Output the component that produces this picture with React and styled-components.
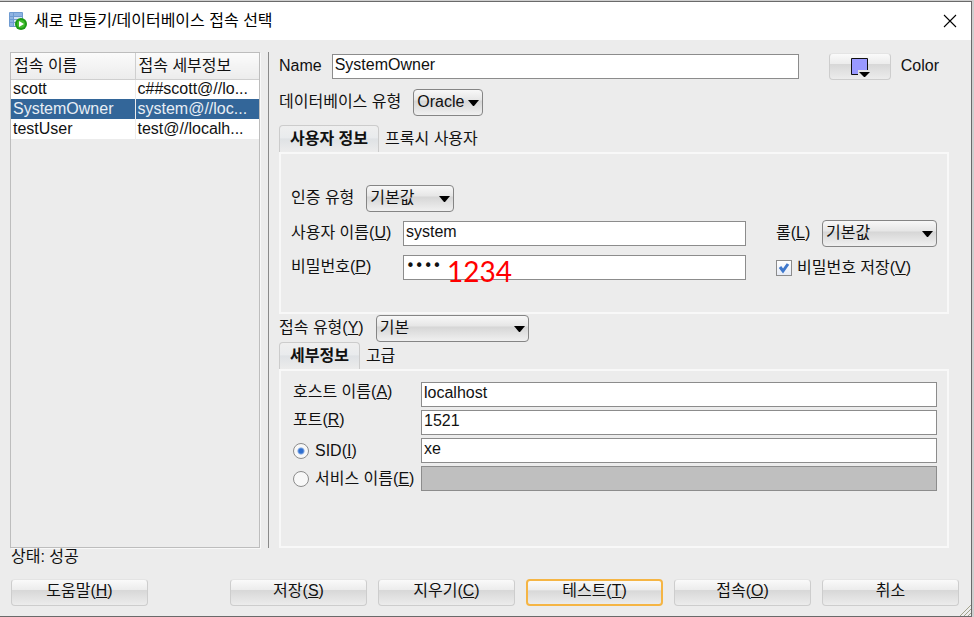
import React, { useState } from 'react';
import styled, { createGlobalStyle } from 'styled-components';

const connections = [
  { name: 'scott', detail: 'c##scott@//lo...' },
  { name: 'SystemOwner', detail: 'system@//loc...' },
  { name: 'testUser', detail: 'test@//localh...' },
];

export default function App() {
  const [selected, setSelected] = useState('SystemOwner');
  const [service, setService] = useState('sid');

  return (
    <>
      <GlobalStyle />
      <Dialog>
        <TitleBar>
          <DatabaseIcon />
          <Title>새로 만들기/데이터베이스 접속 선택</Title>
          <CloseButton aria-label="닫기">
            <svg width="14" height="14" viewBox="0 0 14 14">
              <path d="M1 1 L13 13 M13 1 L1 13" stroke="#000" strokeWidth="1.1" />
            </svg>
          </CloseButton>
        </TitleBar>

        <Main>
          <Sidebar>
            <ConnectionTable>
              <thead>
                <tr>
                  <th>접속 이름</th>
                  <th>접속 세부정보</th>
                </tr>
              </thead>
              <tbody>
                {connections.map(c => (
                  <Row key={c.name} $active={selected === c.name} onClick={() => setSelected(c.name)}>
                    <td>{c.name}</td>
                    <td>{c.detail}</td>
                  </Row>
                ))}
              </tbody>
            </ConnectionTable>
          </Sidebar>
          <Divider />

          <Form>
            <NameRow>
              <Label htmlFor="name">Name</Label>
              <TextInput id="name" defaultValue="SystemOwner" />
              <ColorButton id="color" type="button">
                <ColorIcon />
              </ColorButton>
              <Label htmlFor="color">Color</Label>
            </NameRow>

            <DbTypeRow>
              <Label htmlFor="dbType">데이터베이스 유형</Label>
              <Select id="dbType" width={70} options={['Oracle']} />
            </DbTypeRow>

            <Tabs role="tablist">
              <Tab type="button" role="tab" aria-selected="true" $active>사용자 정보</Tab>
              <Tab type="button" role="tab" aria-selected="false">프록시 사용자</Tab>
            </Tabs>
            <UserPanel>
              <FieldRow>
                <Label htmlFor="auth">인증 유형</Label>
                <Select id="auth" width={88} options={['기본값']} />
              </FieldRow>
              <UserGrid>
                <Label htmlFor="user">사용자 이름(<u>U</u>)</Label>
                <TextInput id="user" defaultValue="system" />
                <RoleField>
                  <Label htmlFor="role">롤(<u>L</u>)</Label>
                  <Select id="role" width={115} options={['기본값']} />
                </RoleField>

                <Label htmlFor="password">비밀번호(<u>P</u>)</Label>
                <PasswordField>
                  <PasswordInput id="password" type="password" defaultValue="1234" />
                  <Note>1234</Note>
                </PasswordField>
                <CheckLabel>
                  <CheckBox>
                    <input type="checkbox" defaultChecked />
                    <svg viewBox="0 0 16 16">
                      <path d="M4 7 L7 11 L12 4" />
                    </svg>
                  </CheckBox>
                  <span>비밀번호 저장(<u>V</u>)</span>
                </CheckLabel>
              </UserGrid>
            </UserPanel>

            <FieldRow>
              <Label htmlFor="connType">접속 유형(<u>Y</u>)</Label>
              <Select id="connType" width={153} options={['기본']} />
            </FieldRow>

            <Tabs role="tablist">
              <Tab type="button" role="tab" aria-selected="true" $active>세부정보</Tab>
              <Tab type="button" role="tab" aria-selected="false">고급</Tab>
            </Tabs>
            <DetailPanel>
              <Label htmlFor="host" $raised>호스트 이름(<u>A</u>)</Label>
              <TextInput id="host" defaultValue="localhost" />

              <Label htmlFor="port" $raised>포트(<u>R</u>)</Label>
              <TextInput id="port" defaultValue="1521" />

              <RadioLabel>
                <Radio type="radio" name="service" checked={service === 'sid'} onChange={() => setService('sid')} />
                <span>SID(<u>I</u>)</span>
              </RadioLabel>
              <TextInput aria-label="SID" defaultValue="xe" disabled={service !== 'sid'} />

              <RadioLabel>
                <Radio type="radio" name="service" checked={service === 'name'} onChange={() => setService('name')} />
                <span>서비스 이름(<u>E</u>)</span>
              </RadioLabel>
              <TextInput aria-label="서비스 이름" disabled={service !== 'name'} />
            </DetailPanel>
          </Form>
        </Main>

        <Status>상태: 성공</Status>
        <Footer>
          <HelpButton>도움말(<u>H</u>)</HelpButton>
          <Button>저장(<u>S</u>)</Button>
          <Button>지우기(<u>C</u>)</Button>
          <Button $focused>테스트(<u>T</u>)</Button>
          <Button>접속(<u>O</u>)</Button>
          <Button>취소</Button>
        </Footer>
        <ResizeGrip viewBox="0 0 11 11">
          <path d="M0 11 L11 0 M4 11 L11 4 M8 11 L11 8" />
        </ResizeGrip>
      </Dialog>
    </>
  );
}

function Select({ id, width, options }) {
  return (
    <SelectBox $width={width}>
      <select id={id}>
        {options.map(o => <option key={o}>{o}</option>)}
      </select>
      <svg width="11" height="6" viewBox="0 0 11 6">
        <path d="M0 0 H11 L6 6 H5 Z" fill="#000" />
      </svg>
    </SelectBox>
  );
}

function DatabaseIcon() {
  return (
    <svg width="20" height="20" viewBox="0 0 20 20">
      <rect x="1" y="1" width="14" height="15" rx="1" fill="#6f9bd1" />
      <path d="M2 2 H5 V5 H2 Z M6 2 H14 V5 H6 Z" fill="#8fb4e3" />
      <path d="M2 6 H5 V8 H2 Z M2 9 H5 V11 H2 Z M2 12 H5 V15 H2 Z" fill="#8fb4e3" />
      <path d="M6 6 H14 V8 H6 Z M6 9 H14 V11 H6 Z M6 12 H14 V15 H6 Z" fill="#d5e3f6" />
      <circle cx="13" cy="13" r="6" fill="#1d9a14" />
      <circle cx="13" cy="13" r="4" fill="#3fbb2c" />
      <path d="M11 10 L16 13 L11 16 Z" fill="#fff" />
    </svg>
  );
}

function ColorIcon() {
  return (
    <svg width="20" height="20" viewBox="0 0 20 20">
      <path d="M1.5 1.5 H17.5 V13 H8 V17.5 H1.5 Z" fill="#9999ff" />
      <path d="M8 17.5 H1.5 V1.5 H17.5 V13" fill="none" stroke="#111" />
      <path d="M9 15 H20 L15 20 H14 Z" fill="#000" />
    </svg>
  );
}

const GlobalStyle = createGlobalStyle`
  * {
    box-sizing: border-box;
  }

  body {
    margin: 0;
    padding: 1px 2px 0 0;
    background: #cfcfcf;
    color: #111;
    font-family: 'Liberation Sans', 'Noto Sans CJK KR', sans-serif;
    font-size: 16px;
    line-height: 20px;
  }

  button, input, select {
    font: inherit;
    color: inherit;
    margin: 0;
  }
`;

const Dialog = styled.div`
  position: relative;
  display: flex;
  flex-direction: column;
  min-height: calc(100vh - 1px);
  background: #ececec;
  border: 1px solid #6a6a6a;
  border-left: none;
`;

const TitleBar = styled.header`
  display: flex;
  align-items: center;
  gap: 6px;
  height: 38px;
  padding: 0 14px 0 8px;
  background: #fff;
`;

const Title = styled.h1`
  flex: 1;
  margin: 0;
  font-size: 16px;
  font-weight: 400;
  color: #000;
`;

const CloseButton = styled.button`
  display: flex;
  padding: 0;
  border: none;
  background: none;
`;

const Main = styled.main`
  flex: 1;
  display: flex;
  padding: 12px 22px 0 10px;
`;

const Sidebar = styled.div`
  flex: 0 0 250px;
  border: 1px solid #bdbdbd;
  box-shadow: 1px 1px 0 #f8f8f8;
`;

const ConnectionTable = styled.table`
  width: 100%;
  table-layout: fixed;
  border-collapse: collapse;

  th {
    height: 26px;
    padding: 0 3px;
    text-align: left;
    font-weight: 400;
    background: linear-gradient(#fbfbfb, #ececec);
    border-bottom: 1px solid #cfcfcf;
  }

  th + th {
    border-left: 1px solid #cfcfcf;
  }

  td {
    height: 20px;
    padding: 0 2px;
    line-height: 18px;
    white-space: nowrap;
    overflow: hidden;
  }

  td + td {
    border-left: 1px solid #ececec;
  }
`;

const Row = styled.tr`
  background: ${props => props.$active ? '#336699' : '#fff'};
  color: ${props => props.$active ? '#e8eef5' : '#111'};
`;

const Divider = styled.div`
  width: 1px;
  margin: 0 10px 0 8px;
  background: #8a8a8a;
`;

const Form = styled.form`
  flex: 1;
  display: flex;
  flex-direction: column;
  padding-top: 1px;
`;

const FieldRow = styled.div`
  display: flex;
  align-items: center;
  gap: 12px;
`;

const NameRow = styled(FieldRow)`
  gap: 10px;
  padding-right: 10px;
`;

const DbTypeRow = styled(FieldRow)`
  margin: 9px 0;
`;

const Label = styled.label`
  line-height: 22px;
  padding-bottom: ${props => props.$raised ? '6px' : '2px'};
  white-space: nowrap;
`;

const TextInput = styled.input`
  flex: 1;
  width: 100%;
  min-width: 0;
  height: 25px;
  padding: 0 2px 3px;
  border: 1px solid #8c8c8c;
  border-radius: 0;
  background: #fff;
  outline: none;

  &:disabled {
    background: #bfbfbf;
  }
`;

const PasswordInput = styled(TextInput)`
  font-family: 'DejaVu Sans', sans-serif;
  font-size: 15px;
`;

const PasswordField = styled.div`
  position: relative;
  display: flex;
`;

// red pen note lying over the password box
const Note = styled.span`
  position: absolute;
  left: 44px;
  top: 2px;
  color: #f00;
  font-family: Lato, sans-serif;
  font-size: 28px;
  line-height: 28px;
  pointer-events: none;
`;

const Button = styled.button`
  width: 137px;
  height: 27px;
  padding: 0 0 3px;
  border: ${props => props.$focused ? '2px solid #f5b544' : '1px solid #cdcdcd'};
  border-top-color: ${props => props.$focused ? '#f5b544' : '#e4e4e4'};
  border-radius: 4px;
  background: linear-gradient(#fafafa, #ececec 40%, #d8d8d8 42%, #ececec);
`;

const HelpButton = styled(Button)`
  margin-right: auto;
`;

const ColorButton = styled(Button)`
  display: flex;
  align-items: center;
  justify-content: center;
  width: 62px;
  padding: 0;
  margin-left: 20px;
`;

const SelectBox = styled.span`
  position: relative;
  width: ${props => props.$width}px;
  height: 27px;

  select {
    appearance: none;
    width: 100%;
    height: 100%;
    padding: 0 18px 1px 3px;
    border: 1px solid #858585;
    border-radius: 4px;
    background: linear-gradient(#f8f8f8, #e6e6e6 40%, #d6d6d6 44%, #f0f0f0);
  }

  svg {
    position: absolute;
    right: 4px;
    top: 11px;
    pointer-events: none;
  }
`;

const Tabs = styled.div`
  display: flex;
`;

const Tab = styled.button`
  height: 27px;
  padding: ${props => props.$active ? '0 10px' : '0 5px'};
  border: 1px solid ${props => props.$active ? '#cccccc' : 'transparent'};
  border-bottom: none;
  border-radius: 4px 4px 0 0;
  background: ${props => props.$active ? 'linear-gradient(#efefef, #e9ebed 45%, #dfe2e5 50%, #ececec)' : 'none'};
  font-weight: ${props => props.$active ? 700 : 400};
`;

const Panel = styled.section`
  border: 2px solid #f8f8f8;
`;

const UserPanel = styled(Panel)`
  display: flex;
  flex-direction: column;
  gap: 8px;
  margin-bottom: 1px;
  padding: 31px 10px 32px;
`;

const UserGrid = styled.div`
  display: grid;
  grid-template-columns: 112px 1fr 191px;
  row-gap: 8px;
  align-items: center;
`;

const RoleField = styled.div`
  display: flex;
  align-items: center;
  justify-content: space-between;
  padding-left: 30px;
`;

const CheckLabel = styled.label`
  display: flex;
  align-items: center;
  gap: 5px;
  padding-left: 30px;
  white-space: nowrap;
`;

const CheckBox = styled.span`
  position: relative;
  display: flex;

  input {
    appearance: none;
    width: 16px;
    height: 16px;
    border: 1px solid #8c8c8c;
    background: linear-gradient(#fff, #e6ebf5);
  }

  svg {
    position: absolute;
    inset: 0;
    fill: none;
    stroke: #3f78cc;
    stroke-width: 3;
    pointer-events: none;
  }

  input:not(:checked) + svg {
    display: none;
  }
`;

const DetailPanel = styled(Panel)`
  flex: 1;
  display: grid;
  grid-template-columns: 128px 1fr;
  grid-auto-rows: 25px;
  align-items: center;
  row-gap: 3px;
  padding: 11px 10px 11px 12px;
`;

const RadioLabel = styled.label`
  display: flex;
  align-items: center;
  gap: 6px;
  white-space: nowrap;
`;

const Radio = styled.input`
  appearance: none;
  flex: none;
  width: 16px;
  height: 16px;
  border: 1px solid #8c8c8c;
  border-radius: 50%;
  background: #f8f8f8;

  &:checked {
    background: radial-gradient(circle, #2f6fd0 0 2px, #7ba3e0 3px, #f8f8f8 4px);
  }
`;

const Status = styled.p`
  margin: 0;
  padding: 0 11px;
  line-height: 18px;
`;

const Footer = styled.footer`
  display: flex;
  gap: 11px;
  padding: 13px 12px 10px 11px;
`;

const ResizeGrip = styled.svg`
  position: absolute;
  right: 0;
  bottom: 0;
  width: 11px;
  height: 11px;
  stroke: #a3a38c;
`;
